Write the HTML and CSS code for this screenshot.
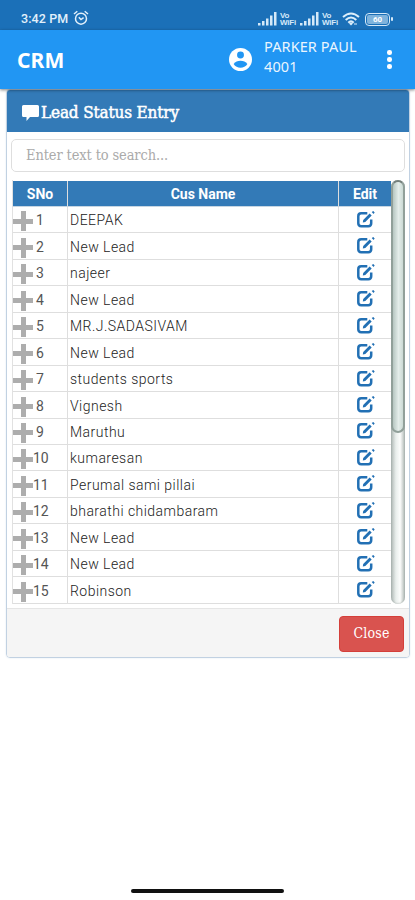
FILE: index.html
```html
<!DOCTYPE html>
<html lang="en">
<head>
<meta charset="utf-8">
<title>CRM</title>
<link rel="stylesheet" href="styles.css">
</head>
<body>
<svg class="defs" width="0" height="0">
  <symbol id="edit" viewBox="0 0 18 17"><path d="M10.300 2.300H4.200Q1.300 2.300 1.300 5.200V12.300Q1.300 15.200 4.200 15.200H11.300Q14.200 15.200 14.200 12.300V8.500" fill="none" stroke="#2270b4" stroke-width="2.500"/><path d="M6.200 8.900 12.600 2.500 14.700 4.600 8.300 11 5.800 11.400ZM14.700 1 16.300 0 17.700 1.500 16.500 3Z" fill="#2270b4"/></symbol>
  <symbol id="signal" viewBox="0 0 19 14"><path d="M0 11h2.500v2.500H0zM4 9h2.500v4.500H4zM8 6.500h2.500v7H8zM12 3.500h2.500v10H12zM16 0h2.500v13.500H16z" fill="#d5e9f8"/></symbol>
</svg>
<header class="status">
  <span class="time">3:42 PM</span>
  <svg class="alarm" viewBox="0 0 16 16"><g fill="none" stroke="#e2f0fb" stroke-width="1.500"><circle cx="8" cy="8.700" r="5.500"/><path d="M5.800 7.200 8 9.500l2.600-1.800M1 4l3.300-2.800M15 4l-3.300-2.800"/></g></svg>
  <div class="indicators">
    <svg class="signal"><use href="#signal"/></svg>
    <span class="vowifi">Vo<br>WiFi</span>
    <svg class="signal second"><use href="#signal"/></svg>
    <span class="vowifi">Vo<br>WiFi</span>
    <svg class="wifi" viewBox="0 0 18 14"><g fill="none" stroke="#dceefb" stroke-width="2"><path d="M1 5Q9-2 17 5M3.700 8Q9 3 14.300 8M6.300 10.700Q9 8 11.700 10.700"/></g><path d="m7 11.500 2 2 2-2-2-1z" fill="#dceefb"/><path d="M12 12h3" stroke="#dceefb"/></svg>
    <span class="battery"><b>60</b></span>
  </div>
</header>
<nav class="appbar">
  <h1>CRM</h1>
  <svg class="avatar" viewBox="0 0 24 24"><circle cx="12" cy="12" r="12" fill="#fff"/><circle cx="12" cy="7.300" r="3.600" fill="#2196f3"/><path d="M4.800 16.800Q7.500 13.400 12 13.400T19.200 16.800Q16.500 20.700 12 20.700T4.800 16.800Z" fill="#2196f3"/></svg>
  <div class="user">PARKER PAUL<br>4001</div>
  <div class="more"><i></i><i></i><i></i></div>
</nav>
<main class="panel">
  <h2><svg class="comment" viewBox="0 0 17 16"><path d="M1.500 0h14Q17 0 17 1.500v9Q17 12 15.500 12H8l-3.500 4V12h-3Q0 12 0 10.500v-9Q0 0 1.500 0Z" fill="#fff"/></svg><span>Lead Status Entry</span></h2>
  <div class="body">
    <input class="search" type="text" placeholder="Enter text to search...">
    <div class="grid">
      <div class="table">
        <div class="row head"><span>SNo</span><span>Cus Name</span><span>Edit</span></div>
        <div class="row"><span class="no"><i class="plus"></i><b>1</b></span><span class="name">DEEPAK</span><span class="act"><svg><use href="#edit"/></svg></span></div>
        <div class="row"><span class="no"><i class="plus"></i><b>2</b></span><span class="name">New Lead</span><span class="act"><svg><use href="#edit"/></svg></span></div>
        <div class="row"><span class="no"><i class="plus"></i><b>3</b></span><span class="name">najeer</span><span class="act"><svg><use href="#edit"/></svg></span></div>
        <div class="row"><span class="no"><i class="plus"></i><b>4</b></span><span class="name">New Lead</span><span class="act"><svg><use href="#edit"/></svg></span></div>
        <div class="row"><span class="no"><i class="plus"></i><b>5</b></span><span class="name">MR.J.SADASIVAM</span><span class="act"><svg><use href="#edit"/></svg></span></div>
        <div class="row"><span class="no"><i class="plus"></i><b>6</b></span><span class="name">New Lead</span><span class="act"><svg><use href="#edit"/></svg></span></div>
        <div class="row"><span class="no"><i class="plus"></i><b>7</b></span><span class="name">students sports</span><span class="act"><svg><use href="#edit"/></svg></span></div>
        <div class="row"><span class="no"><i class="plus"></i><b>8</b></span><span class="name">Vignesh</span><span class="act"><svg><use href="#edit"/></svg></span></div>
        <div class="row"><span class="no"><i class="plus"></i><b>9</b></span><span class="name">Maruthu</span><span class="act"><svg><use href="#edit"/></svg></span></div>
        <div class="row"><span class="no"><i class="plus"></i><b>10</b></span><span class="name">kumaresan</span><span class="act"><svg><use href="#edit"/></svg></span></div>
        <div class="row"><span class="no"><i class="plus"></i><b>11</b></span><span class="name">Perumal sami pillai</span><span class="act"><svg><use href="#edit"/></svg></span></div>
        <div class="row"><span class="no"><i class="plus"></i><b>12</b></span><span class="name">bharathi chidambaram</span><span class="act"><svg><use href="#edit"/></svg></span></div>
        <div class="row"><span class="no"><i class="plus"></i><b>13</b></span><span class="name">New Lead</span><span class="act"><svg><use href="#edit"/></svg></span></div>
        <div class="row"><span class="no"><i class="plus"></i><b>14</b></span><span class="name">New Lead</span><span class="act"><svg><use href="#edit"/></svg></span></div>
        <div class="row"><span class="no"><i class="plus"></i><b>15</b></span><span class="name">Robinson</span><span class="act"><svg><use href="#edit"/></svg></span></div>
      </div>
      <div class="track"><div class="thumb"></div></div>
    </div>
  </div>
  <footer><button type="button">Close</button></footer>
</main>
<div class="home"></div>
</body>
</html>
```
FILE: styles.css
```css
* { box-sizing: border-box; }
body { margin: 0; height: 900px; display: flex; flex-direction: column; background: #fff; font-family: Roboto, sans-serif; overflow: hidden; }
.defs { display: none; }
svg { display: block; flex: none; }
.status { height: 30px; flex: none; background: #1b70b8; display: flex; align-items: center; padding: 8px 22px 0 21px; color: #e2f0fb; }
.time { font-size: 12.5px; font-weight: 500; letter-spacing: .1px; width: 52px; margin-top: -1px; white-space: nowrap; }
.alarm { width: 16px; height: 16px; margin-top: -2px; }
.indicators { margin-left: auto; display: flex; align-items: center; }
.signal { width: 19px; height: 14px; margin-right: 3px; }
.second { margin-left: 3px; }
.vowifi { width: 17px; font: bold 8px/7.500px "Liberation Sans", sans-serif; letter-spacing: -.2px; color: #d5e9f8; }
.wifi { width: 18px; height: 14px; margin: 0 5px 0 3px; }
.battery { position: relative; width: 25px; height: 13px; border: 1.5px solid #d5e9f8; border-radius: 4px; margin-right: 3px; display: flex; padding: 1px; }
.battery b { flex: 1; background: #7fb3dc; border-radius: 2px; font-size: 8px; line-height: 9px; text-align: center; color: #fff; }
.battery::after { content: ""; position: absolute; right: -4px; top: 3px; width: 2px; height: 4px; background: #d5e9f8; border-radius: 1px; }
.appbar { height: 59px; flex: none; background: #2196f3; color: #fff; display: flex; align-items: flex-start; padding-left: 17px; box-shadow: 0 1px 3px rgba(0,0,0,.5); position: relative; z-index: 1; }
h1 { margin: 15px 0 0; width: 212px; font: bold 21px/30px "Noto Sans", sans-serif; letter-spacing: .1px; }
.avatar { width: 23px; height: 23px; margin-top: 18px; }
.user { margin: 6px 0 0 12px; width: 120px; font: 14.500px/20px "Noto Sans", sans-serif; letter-spacing: .1px; color: #eaf5fe; white-space: nowrap; }
.more { display: flex; flex-direction: column; gap: 2.500px; margin: 20px 0 0 3px; }
.more i { width: 4.500px; height: 4.500px; border-radius: 50%; background: #fff; }
.panel { margin: 0 5px 0 6px; height: 569px; flex: none; border: 1px solid #c1d1e2; border-radius: 4px; overflow: hidden; display: flex; flex-direction: column; box-shadow: 0 0 2px #dce7ef; }
h2 { margin: 0; height: 42px; flex: none; background: #337ab7; color: #fff; display: flex; align-items: center; padding: 1px 0 0 15px; font: 17px/24px "DejaVu Serif Condensed", "DejaVu Serif", serif; -webkit-text-stroke: .5px #fff; letter-spacing: -.15px; white-space: nowrap; }
.comment { width: 17px; height: 16px; margin: 3px 2px 0 0; }
.body { flex: 1; padding: 7px 4px 0; min-height: 0; }
.search { display: block; width: 394px; height: 33px; margin: 0; border: 1px solid #dedede; border-radius: 5px; padding: 0 14px 1px; font: 14.500px "DejaVu Serif Condensed", "DejaVu Serif", serif; letter-spacing: -.12px; background: #fff; }
.search::placeholder { color: #aaa; opacity: 1; }
.grid { display: flex; height: 424px; margin: 8px 0 0 1px; }
.table { width: 380px; height: 424px; overflow: hidden; border-left: 1px solid #e1e1e1; }
.row { display: grid; grid-template-columns: 55px 271px 1fr; height: 26.45px; border-bottom: 1px solid #dedede; color: #555; font-size: 14px; }
.row > span { display: flex; align-items: center; border-right: 1px solid #dedede; min-width: 0; white-space: nowrap; padding-top: 1.500px; }
.row > span:last-child { border-right: 0; }
.head { height: 27px; padding-top: 1px; border-bottom: 1px solid #c7d6e3; background: linear-gradient(#fff 1px, #337ab7 1px); color: #fff; font-weight: 700; }
.row.head > span { justify-content: center; padding-top: 0; }
.no b { flex: 1; font-weight: 400; text-align: center; margin-right: 20px; }
.plus { width: 20px; height: 20px; flex: none; background: linear-gradient(#adadad, #adadad) center/20px 5px no-repeat, linear-gradient(#adadad, #adadad) center/5px 20px no-repeat; margin-top: 2px; }
.row > .name { padding-left: 2px; letter-spacing: .47px; font-weight: 300; color: #222; }
.row > .act { justify-content: center; }
.act svg { width: 18px; height: 17px; margin: -2px 0 0 1px; }
.track { width: 14px; height: 424px; border-radius: 7px; background: linear-gradient(90deg, #adb6b3, #e9eeec 35%, #fcfdfc 65%, #aeb7b4); box-shadow: inset 0 0 2px #9aa5a1; }
.thumb { width: 14px; height: 253px; border-radius: 7px; border: 2px solid #91a09a; border-top-color: #737f7b; background: linear-gradient(90deg, #b6c6c1, #e4edea 55%, #cbdad5); }
footer { height: 49px; flex: none; background: #f5f5f5; border-top: 1px solid #e5e5e5; display: flex; justify-content: flex-end; padding: 7px 5px 0; }
button { width: 65px; height: 36px; border: 1px solid #d43f3a; border-radius: 4px; background: #d9534f; color: #fff; padding: 0 0 2px; font: 14px "DejaVu Serif Condensed", "DejaVu Serif", serif; letter-spacing: .2px; }
.home { width: 153px; height: 4px; flex: none; margin: auto auto 7px 131px; background: #111; border-radius: 2px; }
```
